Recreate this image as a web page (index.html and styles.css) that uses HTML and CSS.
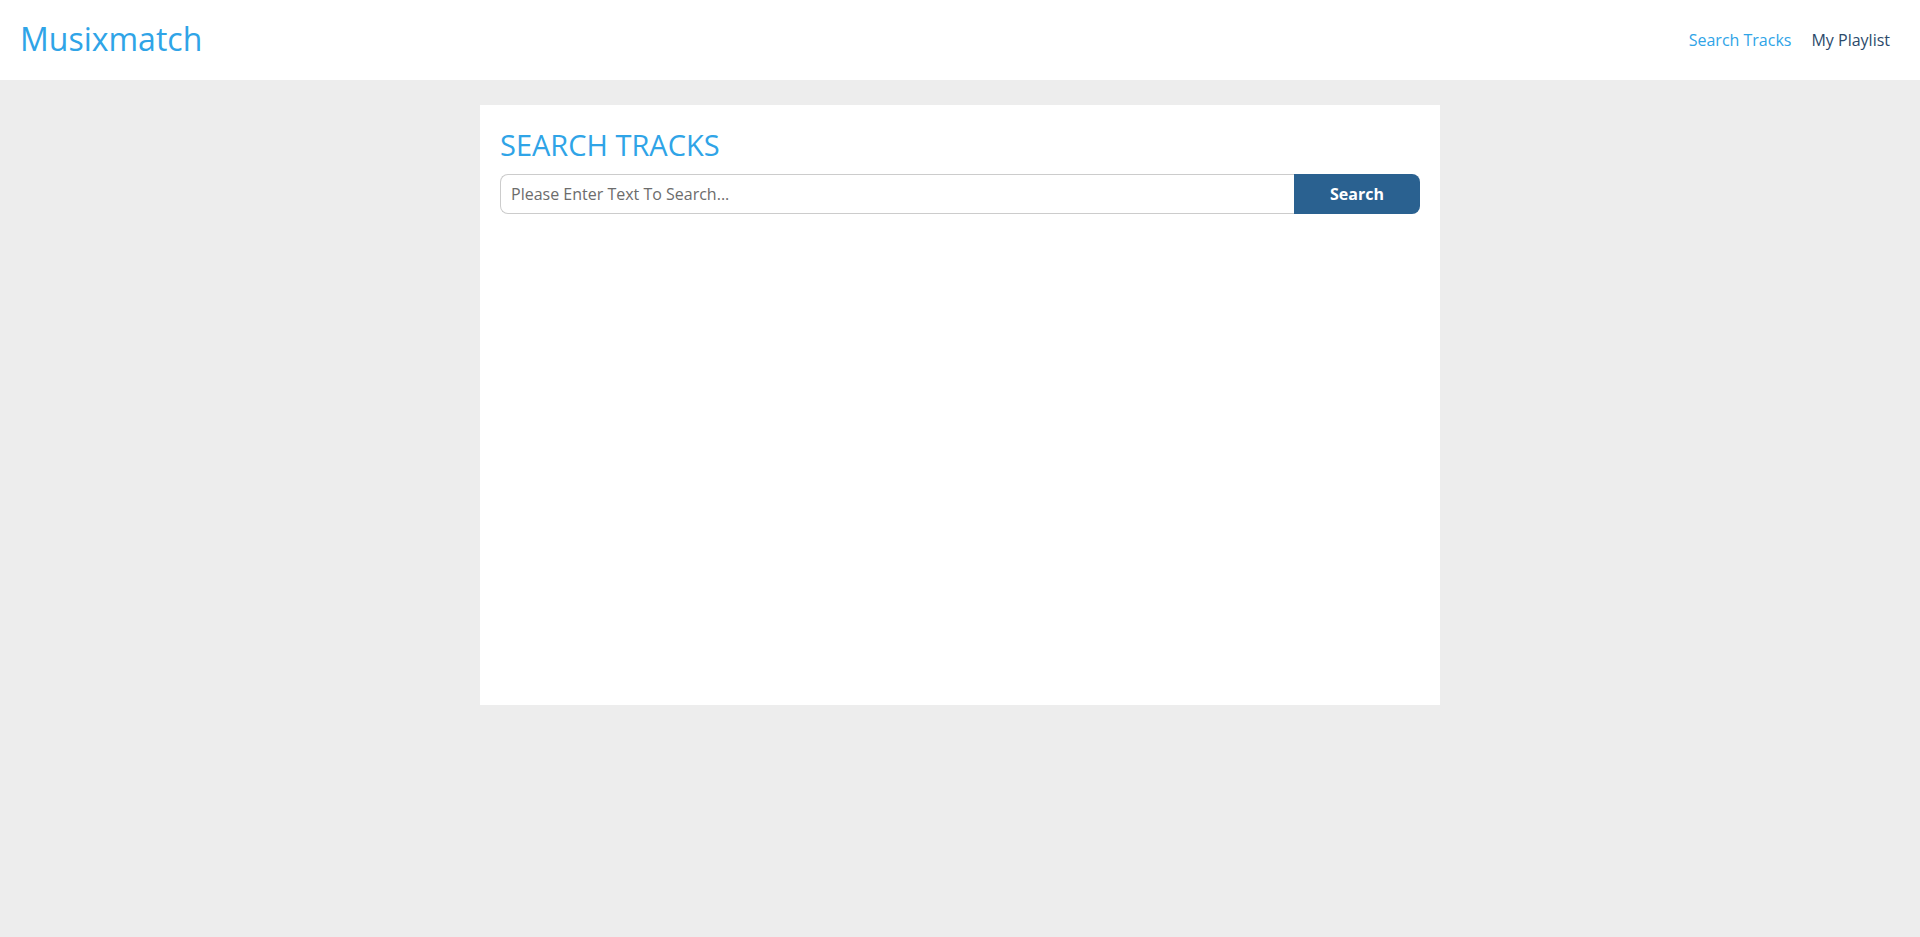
FILE: index.html
```html
<!DOCTYPE html>
<html lang="en">
<head>
<meta charset="utf-8">
<title>Musixmatch</title>
<link rel="stylesheet" href="styles.css">
</head>
<body>
<header class="navbar">
  <a class="brand" href="#">Musixmatch</a>
  <nav class="nav">
    <a class="nav-link active" href="#">Search Tracks</a>
    <a class="nav-link" href="#">My Playlist</a>
  </nav>
</header>
<main class="main">
  <section class="card">
    <h1 class="title">SEARCH TRACKS</h1>
    <form class="search">
      <input class="search-input" type="text" placeholder="Please Enter Text To Search...">
      <button class="search-btn" type="button">Search</button>
    </form>
  </section>
</main>
</body>
</html>
```
FILE: styles.css
```css
* { box-sizing: border-box; }
html, body { margin: 0; height: 100%; }
body {
  font-family: "Open Sans", "Liberation Sans", sans-serif;
  background: #ededed;
  color: #333;
}
.navbar {
  height: 80px;
  background: #fff;
  display: flex;
  align-items: center;
  justify-content: space-between;
  padding: 0 30px 0 20px;
}
.brand {
  color: #2fa4e7;
  font-size: 32px;
  text-decoration: none;
  line-height: 1;
  padding-bottom: 2px;
}
.nav {
  display: flex;
  gap: 20px;
}
.nav-link {
  font-size: 16px;
  color: #2c4a6b;
  text-decoration: none;
}
.nav-link.active { color: #2fa4e7; }
.main {
  display: flex;
  justify-content: center;
  padding-top: 25px;
}
.card {
  width: 960px;
  height: 600px;
  background: #fff;
  padding: 20px;
}
.title {
  margin: 0 0 9px;
  font-weight: 400;
  font-size: 29px;
  line-height: 40px;
  color: #2fa4e7;
}
.search {
  display: flex;
  height: 40px;
}
.search-input {
  flex: 1;
  height: 40px;
  border: 1px solid #ccc;
  border-right: none;
  border-radius: 8px 0 0 8px;
  padding: 0 10px;
  font-family: inherit;
  font-size: 16px;
  color: #555;
  outline: none;
}
.search-input::placeholder { color: #6c6c6c; }
.search-btn {
  width: 126px;
  height: 40px;
  border: none;
  border-radius: 0 8px 8px 0;
  background: #2a6190;
  color: #fff;
  font-family: inherit;
  font-weight: 700;
  font-size: 16px;
}
```
